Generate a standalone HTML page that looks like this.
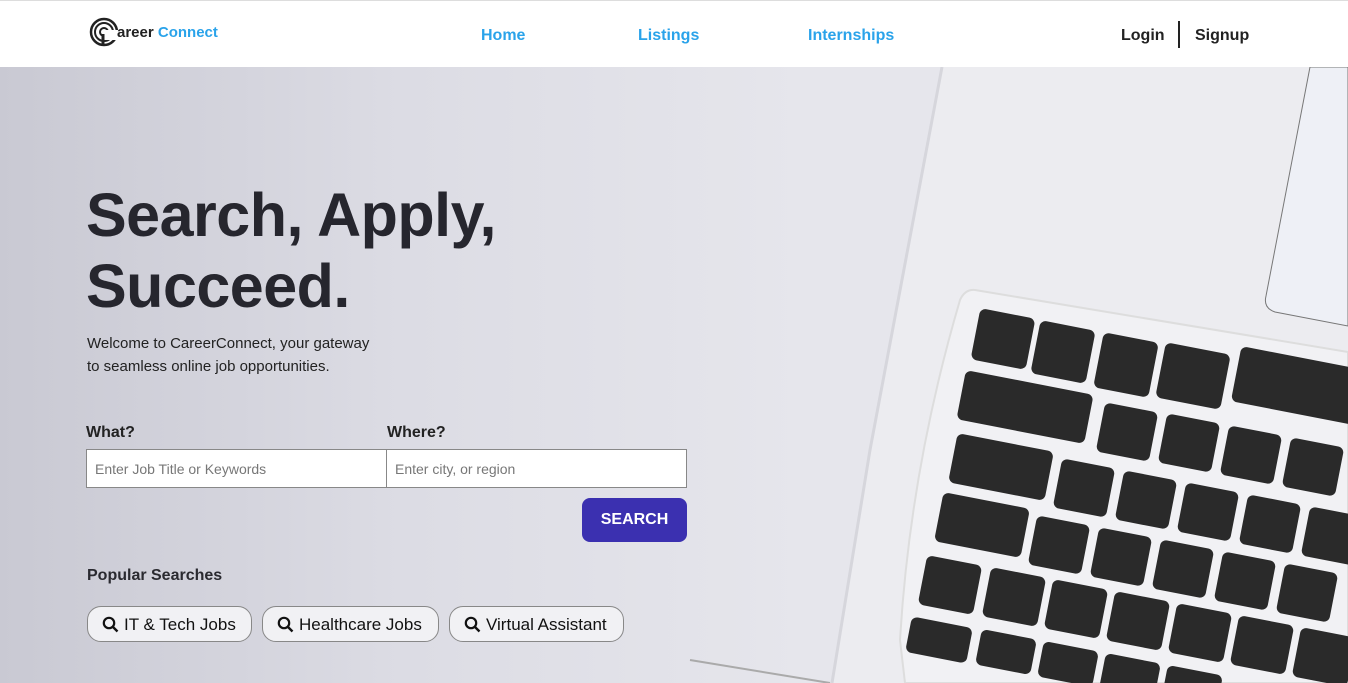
<!DOCTYPE html>
<html><head><meta charset="utf-8"><style>
*{margin:0;padding:0;box-sizing:border-box}
body{width:1348px;height:683px;overflow:hidden;font-family:"Liberation Sans",sans-serif;position:relative;background:#fff}
.hdr{position:absolute;left:0;top:0;width:1348px;height:67px;background:#fff;border-top:1px solid #ddd;z-index:3}
.hero{position:absolute;left:0;top:67px;width:1348px;height:616px;background:linear-gradient(90deg,#c9c9d3 0%,#dcdce4 30%,#e6e6ec 60%,#e8e8ee 100%);overflow:hidden}
.nav{position:absolute;top:26px;font-size:16px;color:#2aa3ea;font-weight:bold}
.r{position:absolute;top:26px;font-size:16px;color:#222;font-weight:bold}
h1{position:absolute;left:86px;top:180px;font-size:61px;line-height:71px;font-weight:bold;color:#26262e;letter-spacing:-0.5px}
.p{position:absolute;left:87px;top:332px;font-size:15px;line-height:23px;color:#222}
.lbl{position:absolute;top:424px;font-size:16px;font-weight:bold;color:#222}
.inp{position:absolute;top:449px;height:39px;background:#fff;border:1px solid #888;font-size:14px;color:#777;padding:11px 8px}
.btn{position:absolute;left:582px;top:498px;width:105px;height:44px;background:#3b30b0;border-radius:8px;color:#fff;font-weight:bold;font-size:16px;text-align:center;line-height:44px}
.pill{position:absolute;top:606px;height:36px;border:1px solid #888;border-radius:14px;background:#f1f1f4;font-size:17px;color:#111;line-height:35px;padding-left:36px}
.pill svg{position:absolute;left:14px;top:9px}
</style></head><body>
<div class="hdr">
  <svg style="position:absolute;left:89px;top:15px" width="32" height="32" viewBox="0 0 32 32"><circle cx="15" cy="16" r="13" fill="none" stroke="#222" stroke-width="2.5"/><circle cx="15" cy="16" r="9" fill="none" stroke="#222" stroke-width="2"/><circle cx="15" cy="16" r="4" fill="none" stroke="#222" stroke-width="2"/><rect x="14" y="14" width="20" height="10" fill="#fff"/><path d="M14 18v10" stroke="#222" stroke-width="3"/></svg>
  <div style="position:absolute;left:117px;top:23px;font-size:15px;font-weight:bold;color:#222">areer <span style="color:#2aa3ea">Connect</span></div>
  <div class="nav" style="left:481px">Home</div>
  <div class="nav" style="left:638px">Listings</div>
  <div class="nav" style="left:808px">Internships</div>
  <div class="r" style="left:1121px">Login</div>
  <div style="position:absolute;left:1178px;top:20px;width:2px;height:27px;background:#222"></div>
  <div class="r" style="left:1195px">Signup</div>
</div>
<div class="hero">
<svg width="1348" height="616" style="position:absolute;left:0;top:0" viewBox="0 67 1348 616">
  <path d="M942 67 L1348 67 L1348 683 L832 683 L870 450 Z" fill="#ececf0"/>
  <path d="M942 67 L870 450 L832 683" fill="none" stroke="#d6d6dc" stroke-width="3"/>
  <path d="M1310 67 L1348 67 L1348 326 L1275 312 Q1263 308 1266 296 Z" fill="#eef0f6" stroke="#777" stroke-width="1"/>
  <path d="M975 290 L1348 352 L1348 683 L905 683 L900 640 Q910 470 960 300 Q965 289 975 290 Z" fill="#f1f1f4" stroke="#ddd" stroke-width="2"/>
  <g fill="#2a2a2a">
    <rect x="975" y="313" width="56" height="52" rx="6" transform="rotate(11 1003 339)"/>
    <rect x="1035" y="325" width="56" height="54" rx="6" transform="rotate(11 1063 352)"/>
    <rect x="1098" y="337" width="56" height="56" rx="6" transform="rotate(11 1126 365)"/>
    <rect x="1160" y="348" width="66" height="56" rx="6" transform="rotate(11 1193 376)"/>
    <rect x="1235" y="358" width="130" height="56" rx="6" transform="rotate(11 1300 386)"/>
    <rect x="960" y="382" width="130" height="50" rx="6" transform="rotate(11 1025 407)"/>
    <rect x="1100" y="407" width="54" height="50" rx="6" transform="rotate(11 1127 432)"/>
    <rect x="1162" y="418" width="54" height="50" rx="6" transform="rotate(11 1189 443)"/>
    <rect x="1224" y="430" width="54" height="50" rx="6" transform="rotate(11 1251 455)"/>
    <rect x="1286" y="442" width="54" height="50" rx="6" transform="rotate(11 1313 467)"/>
    <rect x="952" y="442" width="98" height="50" rx="6" transform="rotate(11 1001 467)"/>
    <rect x="1057" y="463" width="54" height="50" rx="6" transform="rotate(11 1084 488)"/>
    <rect x="1119" y="475" width="54" height="50" rx="6" transform="rotate(11 1146 500)"/>
    <rect x="1181" y="487" width="54" height="50" rx="6" transform="rotate(11 1208 512)"/>
    <rect x="1243" y="499" width="54" height="50" rx="6" transform="rotate(11 1270 524)"/>
    <rect x="1305" y="511" width="54" height="50" rx="6" transform="rotate(11 1332 536)"/>
    <rect x="938" y="500" width="88" height="50" rx="6" transform="rotate(11 982 525)"/>
    <rect x="1032" y="520" width="54" height="50" rx="6" transform="rotate(11 1059 545)"/>
    <rect x="1094" y="532" width="54" height="50" rx="6" transform="rotate(11 1121 557)"/>
    <rect x="1156" y="544" width="54" height="50" rx="6" transform="rotate(11 1183 569)"/>
    <rect x="1218" y="556" width="54" height="50" rx="6" transform="rotate(11 1245 581)"/>
    <rect x="1280" y="568" width="54" height="50" rx="6" transform="rotate(11 1307 593)"/>
    <rect x="922" y="560" width="56" height="50" rx="6" transform="rotate(11 950 585)"/>
    <rect x="986" y="572" width="56" height="50" rx="6" transform="rotate(11 1014 597)"/>
    <rect x="1048" y="584" width="56" height="50" rx="6" transform="rotate(11 1076 609)"/>
    <rect x="1110" y="596" width="56" height="50" rx="6" transform="rotate(11 1138 621)"/>
    <rect x="1172" y="608" width="56" height="50" rx="6" transform="rotate(11 1200 633)"/>
    <rect x="1234" y="620" width="56" height="50" rx="6" transform="rotate(11 1262 645)"/>
    <rect x="1296" y="632" width="56" height="50" rx="6" transform="rotate(11 1324 657)"/>
    <rect x="908" y="622" width="62" height="36" rx="6" transform="rotate(11 939 640)"/>
    <rect x="978" y="634" width="56" height="36" rx="6" transform="rotate(11 1006 652)"/>
    <rect x="1040" y="646" width="56" height="36" rx="6" transform="rotate(11 1068 664)"/>
    <rect x="1102" y="658" width="56" height="36" rx="6" transform="rotate(11 1130 676)"/>
    <rect x="1164" y="670" width="56" height="36" rx="6" transform="rotate(11 1192 688)"/>
  </g>
  <path d="M690 660 L830 683" stroke="#aaa" stroke-width="2"/>
</svg>
</div>
<h1>Search, Apply,<br>Succeed.</h1>
<div class="p">Welcome to CareerConnect, your gateway<br>to seamless online job opportunities.</div>
<div class="lbl" style="left:86px">What?</div>
<div class="lbl" style="left:387px">Where?</div>
<div class="inp" style="left:86px;width:301px">Enter Job Title or Keywords</div>
<div class="inp" style="left:386px;width:301px">Enter city, or region</div>
<div class="btn">SEARCH</div>
<div style="position:absolute;left:87px;top:567px;font-size:16px;font-weight:bold;color:#2a2a30">Popular Searches</div>
<div class="pill" style="left:87px;width:165px"><svg width="17" height="17" viewBox="0 0 17 17"><circle cx="7" cy="7" r="5.2" fill="none" stroke="#111" stroke-width="2.2"/><path d="M11 11l4.5 4.5" stroke="#111" stroke-width="2.4"/></svg>IT &amp; Tech Jobs</div>
<div class="pill" style="left:262px;width:177px"><svg width="17" height="17" viewBox="0 0 17 17"><circle cx="7" cy="7" r="5.2" fill="none" stroke="#111" stroke-width="2.2"/><path d="M11 11l4.5 4.5" stroke="#111" stroke-width="2.4"/></svg>Healthcare Jobs</div>
<div class="pill" style="left:449px;width:175px"><svg width="17" height="17" viewBox="0 0 17 17"><circle cx="7" cy="7" r="5.2" fill="none" stroke="#111" stroke-width="2.2"/><path d="M11 11l4.5 4.5" stroke="#111" stroke-width="2.4"/></svg>Virtual Assistant</div>
</body></html>
